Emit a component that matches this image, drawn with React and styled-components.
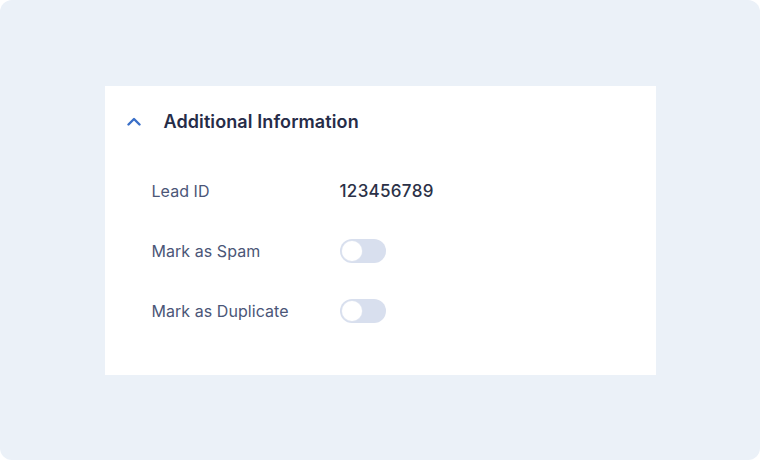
import React, { useState } from "react";
import styled, { createGlobalStyle } from "styled-components";

const Global = createGlobalStyle`
  html, body { margin: 0; padding: 0; background: #ffffff; }
  body { font-family: Inter, "Noto Sans", sans-serif; -webkit-font-smoothing: antialiased; }
`;

const Stage = styled.div`
  width: 760px;
  height: 460px;
  box-sizing: border-box;
  background: #ebf1f8;
  border-radius: 12px;
  display: flex;
  align-items: center;
  justify-content: center;
`;

const Card = styled.section`
  width: 551px;
  height: 289px;
  box-sizing: border-box;
  background: #ffffff;
  display: flex;
  flex-direction: column;
`;

const Header = styled.div`
  display: flex;
  align-items: center;
  gap: 23px;
  height: 72px;
  padding: 0 22px;
  box-sizing: border-box;
`;

const Chevron = styled.svg`
  width: 14px;
  height: 9px;
  flex: none;
  margin-top: -1px;
`;

const Title = styled.h2`
  margin: 0;
  font-size: 18px;
  font-weight: 600;
  color: #262c48;
  letter-spacing: 0.1px;
`;

const Body = styled.div`
  display: flex;
  flex-direction: column;
  padding: 3px 0 0 47px;
`;

const Row = styled.div`
  display: grid;
  grid-template-columns: 188px 1fr;
  align-items: center;
  height: 60px;
`;

const Label = styled.span`
  font-size: 16px;
  color: #4b5677;
  letter-spacing: 0.05px;
`;

const Value = styled.span`
  font-size: 17px;
  font-weight: 500;
  color: #2b3147;
  letter-spacing: 0.3px;
`;

const Track = styled.button`
  width: 46px;
  height: 24px;
  border: none;
  padding: 2px;
  border-radius: 12px;
  background: ${(p) => (p.$on ? "#3a6fc8" : "#d8dfee")};
  display: flex;
  justify-content: ${(p) => (p.$on ? "flex-end" : "flex-start")};
  align-items: center;
  cursor: pointer;
  box-sizing: border-box;
`;

const Knob = styled.span`
  width: 20px;
  height: 20px;
  border-radius: 50%;
  background: #ffffff;
  box-shadow: 0 0 0 0.5px #e3e8f2;
`;

function Toggle() {
  const [on, setOn] = useState(false);
  return (
    <Track $on={on} onClick={() => setOn(!on)} aria-pressed={on}>
      <Knob />
    </Track>
  );
}

export default function App() {
  return (
    <>
      <Global />
      <Stage>
        <Card>
          <Header>
            <Chevron viewBox="0 0 14 9">
              <path d="M1.5 7.5 L7 2 L12.5 7.5" fill="none" stroke="#3a6fc8" strokeWidth="2.4" strokeLinecap="round" strokeLinejoin="round" />
            </Chevron>
            <Title>Additional Information</Title>
          </Header>
          <Body>
            <Row>
              <Label>Lead ID</Label>
              <Value>123456789</Value>
            </Row>
            <Row>
              <Label>Mark as Spam</Label>
              <Toggle />
            </Row>
            <Row>
              <Label>Mark as Duplicate</Label>
              <Toggle />
            </Row>
          </Body>
        </Card>
      </Stage>
    </>
  );
}
